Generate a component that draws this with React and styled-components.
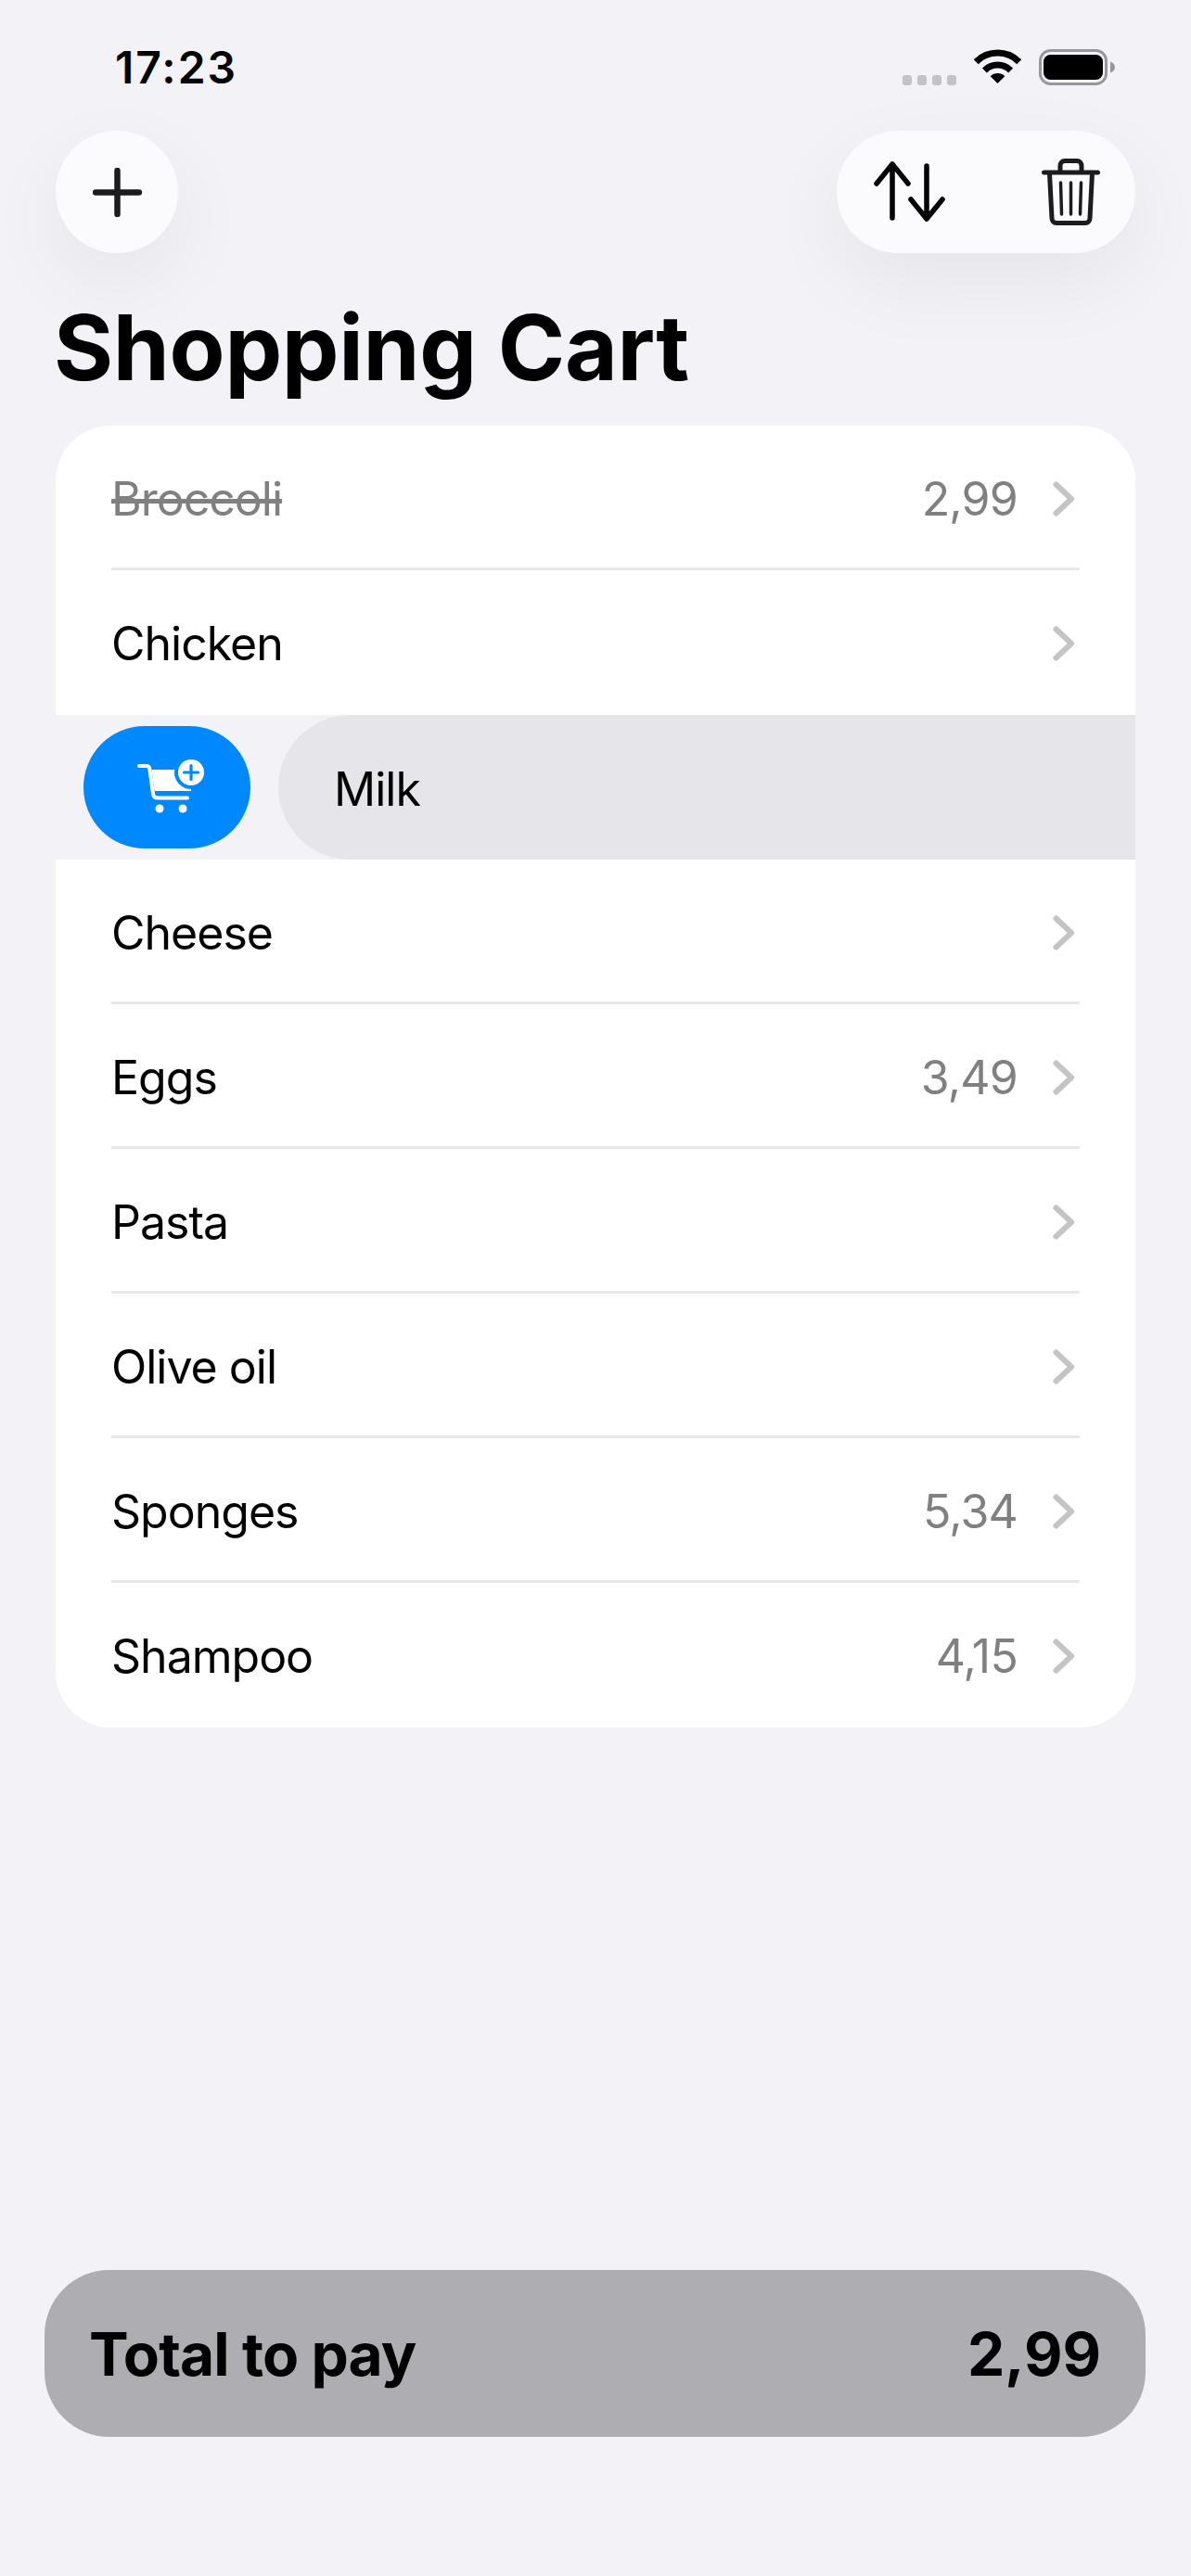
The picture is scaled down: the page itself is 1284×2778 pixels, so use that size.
import styled, { createGlobalStyle } from "styled-components";

const GlobalStyle = createGlobalStyle`
  html, body {
    margin: 0;
    padding: 0;
    background: #f2f2f7;
  }
  * {
    box-sizing: border-box;
  }
`;

const items = [
  { name: "Broccoli", price: "2,99", done: true, divider: true },
  { name: "Chicken" },
  { name: "Milk", swiped: true },
  { name: "Cheese", divider: true },
  { name: "Eggs", price: "3,49", divider: true },
  { name: "Pasta", divider: true },
  { name: "Olive oil", divider: true },
  { name: "Sponges", price: "5,34", divider: true },
  { name: "Shampoo", price: "4,15" },
];

const WifiIcon = () => (
  <svg width="51" height="37" viewBox="0 0 51 37">
    <path d="M2.2 13.7A33 33 0 0 1 48.8 13.7" fill="none" stroke="#000" strokeWidth="7" />
    <path d="M11.4 22.9A20 20 0 0 1 39.6 22.9" fill="none" stroke="#000" strokeWidth="7" />
    <path d="M25.5 37L17.7 29.2A11 11 0 0 1 33.3 29.2Z" fill="#000" />
  </svg>
);

const BatteryIcon = () => (
  <svg width="82" height="39" viewBox="0 0 82 39">
    <rect x="1.5" y="1.5" width="71" height="36" rx="11" fill="none" stroke="#98989c" strokeWidth="3" />
    <rect x="5" y="6" width="64" height="27" rx="7.5" fill="#000" />
    <path d="M77 13.5C80 14.5 82 16.5 82 19.5C82 22.5 80 24.5 77 25.5Z" fill="#98989c" />
  </svg>
);

const PlusIcon = () => (
  <svg width="53" height="53" viewBox="0 0 53 53">
    <path d="M26.5 3V50M3 26.5H50" fill="none" stroke="#1c1c1e" strokeWidth="6.5" strokeLinecap="round" />
  </svg>
);

const SortIcon = () => (
  <svg width="78" height="66" viewBox="0 0 78 66">
    <path
      d="M20 61V4M3 24L20 3L37 24M57 5V62M40 41L57 62L74 41"
      fill="none"
      stroke="#000"
      strokeWidth="5.5"
      strokeLinecap="round"
      strokeLinejoin="round"
    />
  </svg>
);

const TrashIcon = () => (
  <svg width="63" height="72" viewBox="0 0 63 72">
    <g fill="none" stroke="#1c1c1e" strokeLinecap="round">
      <path d="M2.5 15H60.5" strokeWidth="5" />
      <path d="M20 14V8C20 4.5 22 2.5 25 2.5H38C41 2.5 43 4.5 43 8V14" strokeWidth="5" />
      <path d="M8.5 16L11 64C11 67.5 13 69.5 16 69.5H47C50 69.5 52 67.5 52 64L54.5 16" strokeWidth="5" />
      <path d="M20.5 26L21.5 60M31.5 26V60M42.5 26L41.5 60" strokeWidth="3.5" />
    </g>
  </svg>
);

const CartPlusIcon = () => (
  <svg width="76" height="60" viewBox="0 0 76 60">
    <path d="M2 7H10C12 7 13 8 13.3 10L17 37C17.3 40 19 41.5 22 41.5H54" fill="none" stroke="#fff" strokeWidth="4" strokeLinecap="round" />
    <path d="M15.5 11H58V34H20C18.5 34 18.4 33 18.2 32Z" fill="#fff" />
    <circle cx="24" cy="53" r="4.5" fill="#fff" />
    <circle cx="49" cy="53" r="4.5" fill="#fff" />
    <circle cx="58" cy="14" r="18" fill="#0088ff" />
    <circle cx="58" cy="14" r="14" fill="#fff" />
    <path d="M58 6.5V21.5M50.5 14H65.5" fill="none" stroke="#0088ff" strokeWidth="3.2" strokeLinecap="round" />
  </svg>
);

const Chevron = () => (
  <ChevronSvg width="24" height="38" viewBox="0 0 24 38">
    <path d="M3.5 3.5L20 19L3.5 34.5" fill="none" stroke="#c4c4c7" strokeWidth="6" strokeLinecap="round" strokeLinejoin="round" />
  </ChevronSvg>
);

const App = () => {
  return (
    <Page>
      <GlobalStyle />
      <StatusBar>
        <Clock>17:23</Clock>
        <StatusIcons>
          <SignalDots>
            <Dot />
            <Dot />
            <Dot />
            <Dot />
          </SignalDots>
          <WifiIcon />
          <BatteryIcon />
        </StatusIcons>
      </StatusBar>

      <Toolbar>
        <RoundButton>
          <PlusIcon />
        </RoundButton>
        <ActionPill>
          <SortIcon />
          <TrashIcon />
        </ActionPill>
      </Toolbar>

      <Title>Shopping Cart</Title>

      <Card>
        {items.map((item) =>
          item.swiped ? (
            <SwipedRow key={item.name}>
              <SwipeAction>
                <CartPlusIcon />
              </SwipeAction>
              <SwipedBody>
                <ItemName>{item.name}</ItemName>
              </SwipedBody>
            </SwipedRow>
          ) : (
            <Row key={item.name}>
              <RowInner $divider={item.divider}>
                <ItemName $done={item.done}>{item.name}</ItemName>
                {item.price && <Price>{item.price}</Price>}
                <Chevron />
              </RowInner>
            </Row>
          )
        )}
      </Card>

      <TotalBar>
        <TotalLabel>Total to pay</TotalLabel>
        <TotalAmount>2,99</TotalAmount>
      </TotalBar>
    </Page>
  );
};

const Page = styled.div`
  display: flex;
  flex-direction: column;
  height: 2778px;
  padding-bottom: 150px;
  background: #f2f2f7;
  font-family: Inter, "Liberation Sans", sans-serif;
  color: #000;
  overflow: hidden;
`;

const StatusBar = styled.div`
  display: flex;
  align-items: flex-start;
  justify-content: space-between;
  height: 141px;
  padding: 53px 82px 0 124px;
`;

const Clock = styled.div`
  font-size: 48px;
  font-weight: 600;
  line-height: 40px;
  letter-spacing: 2px;
`;

const StatusIcons = styled.div`
  display: flex;
  align-items: flex-start;
  gap: 19px;
`;

const SignalDots = styled.div`
  display: flex;
  gap: 6px;
  margin-top: 28px;
`;

const Dot = styled.span`
  width: 10px;
  height: 11px;
  border-radius: 3px;
  background: #c2c2c8;
`;

const Toolbar = styled.div`
  display: flex;
  justify-content: space-between;
  padding: 0 60px;
`;

const RoundButton = styled.div`
  display: flex;
  align-items: center;
  justify-content: center;
  width: 132px;
  height: 132px;
  border-radius: 50%;
  background: #fbfbfe;
  box-shadow: 0 30px 90px rgba(0, 0, 0, 0.06);
`;

const ActionPill = styled.div`
  display: flex;
  align-items: center;
  justify-content: space-between;
  width: 322px;
  height: 132px;
  padding: 0 38px 0 40px;
  border-radius: 66px;
  background: #fbfbfe;
  box-shadow: 0 30px 90px rgba(0, 0, 0, 0.06);
`;

const Title = styled.h1`
  margin: 42px 0 0;
  padding: 0 58px;
  font-size: 98px;
  font-weight: 700;
  line-height: 119px;
  letter-spacing: -0.3px;
`;

const Card = styled.div`
  margin: 25px 60px 0;
  border-radius: 60px;
  background: #fff;
  overflow: hidden;
`;

const Row = styled.div`
  height: 156px;
  padding: 0 60px;
`;

const RowInner = styled.div`
  display: flex;
  align-items: center;
  gap: 38px;
  height: 100%;
  padding-top: 5px;
  border-bottom: 3px solid ${(p) => (p.$divider ? "#e8e8ea" : "transparent")};
`;

const ChevronSvg = styled.svg`
  flex: none;
  margin-right: 5px;
`;

const ItemName = styled.span`
  flex: 1;
  font-size: 50px;
  font-weight: 400;
  letter-spacing: -1px;
  color: ${(p) => (p.$done ? "#808080" : "#000")};
  text-decoration: ${(p) => (p.$done ? "line-through" : "none")};
`;

const Price = styled.span`
  font-size: 50px;
  font-weight: 400;
  letter-spacing: -0.8px;
  color: #808080;
`;

const SwipedRow = styled.div`
  display: flex;
  align-items: center;
  gap: 30px;
  height: 156px;
  padding-left: 30px;
  background: #f2f2f7;
`;

const SwipeAction = styled.div`
  display: flex;
  flex: none;
  align-items: center;
  justify-content: center;
  width: 180px;
  height: 132px;
  padding-left: 12px;
  border-radius: 66px;
  background: #0088ff;
`;

const SwipedBody = styled.div`
  display: flex;
  flex: 1;
  align-items: center;
  align-self: stretch;
  padding: 3px 0 0 60px;
  border-radius: 78px 0 0 78px;
  background: #e5e5ea;
`;

const TotalBar = styled.div`
  display: flex;
  align-items: center;
  justify-content: space-between;
  height: 180px;
  margin: auto 49px 0 48px;
  padding: 0 48px;
  border-radius: 70px;
  background: #aeaeb2;
`;

const TotalLabel = styled.span`
  font-size: 64px;
  font-weight: 700;
  letter-spacing: -0.9px;
`;

const TotalAmount = styled.span`
  font-size: 64px;
  font-weight: 700;
`;

export default App;
